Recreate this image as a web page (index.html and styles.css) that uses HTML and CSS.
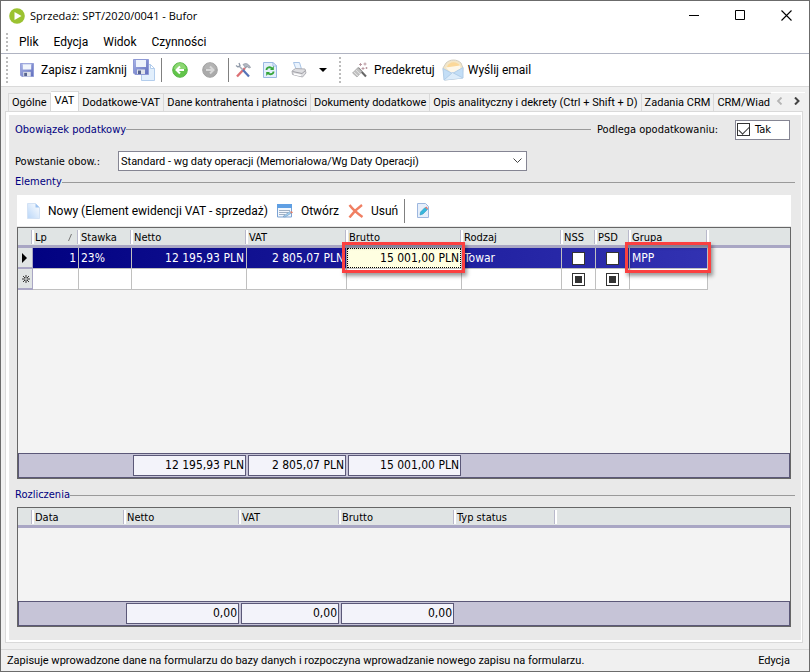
FILE: index.html
```
<!DOCTYPE html>
<html lang="pl">
<head>
    <meta charset="UTF-8">
    <meta name="viewport" content="width=device-width, initial-scale=1.0">
    <title>Sprzedaż: SPT/2020/0041 - Bufor</title>
    <link rel="stylesheet" href="styles.css">
</head>
<body>
    <div class="window">
        <header class="titlebar">
            <svg class="logo" width="16" height="16" viewBox="0 0 16 16">
                <circle cx="8" cy="8" r="7.8" fill="#9bc231"/>
                <path d="M5.5 4v8l7-4z" fill="#fff"/>
            </svg>
            <h1>Sprzedaż: SPT/2020/0041 - Bufor</h1>
            <div class="controls">
                <button aria-label="Minimalizuj"><svg width="11" height="11"><path d="M0 5.5h10" stroke="#000"/></svg></button>
                <button aria-label="Maksymalizuj"><svg width="11" height="11"><path d="M.5.5h9v9h-9z" fill="none" stroke="#000"/></svg></button>
                <button aria-label="Zamknij"><svg width="11" height="11"><path d="M.5.5l10 10M10.5.5l-10 10" stroke="#000" stroke-width="1.1"/></svg></button>
            </div>
        </header>

        <nav class="menu">
            <span class="grip"></span>
            <button>Plik</button>
            <button>Edycja</button>
            <button>Widok</button>
            <button>Czynności</button>
        </nav>

        <div class="toolbar">
            <span class="grip"></span>
            <button class="save">
                <svg width="14" height="14" viewBox="0 0 15 15">
                    <defs>
                        <linearGradient id="disk" x1="0" y1="0" x2="1" y2="1">
                            <stop offset="0" stop-color="#a9b4e6"/>
                            <stop offset="1" stop-color="#5f6dbd"/>
                        </linearGradient>
                    </defs>
                    <path d="M.5.5h14v14H2L.5 13z" fill="url(#disk)" stroke="#8f9ad6"/>
                    <path d="M3 1h9v6H3z" fill="#f1f5fc"/>
                    <path d="M3 1h9v1H3z" fill="#d3dcf2"/>
                    <path d="M3.5 9.5h8v5h-8z" fill="#dfe3ea"/>
                    <path d="M4.5 10.5h3V14h-3z" fill="#56638f"/>
                </svg>
                Zapisz i zamknij
            </button>
            <button class="save-new" aria-label="Zapisz i nowy">
                <svg width="22" height="22" viewBox="0 0 22 22">
                    <path d="M8.5 5.5h9l4 4v12h-13z" fill="#e2effc" stroke="#b3cdec"/>
                    <path d="M17.5 5.5v4h4z" fill="#fff" stroke="#b3cdec"/>
                    <path d="M.5.5h15v15H2L.5 14z" fill="url(#disk)" stroke="#8f9ad6"/>
                    <path d="M3 1h10v7H3z" fill="#eef3fb"/>
                    <path d="M4 10.5h8V15H4z" fill="#dfe3ea"/>
                    <path d="M5 11.5h3V15H5z" fill="#56638f"/>
                </svg>
            </button>
            <span class="separator"></span>
            <button class="nav-icon" aria-label="Poprzedni">
                <svg width="16" height="16" viewBox="0 0 16 16">
                    <circle cx="8" cy="8" r="7.3" fill="#62c44a" stroke="#5ab848"/>
                    <path d="M2 7a6 6 0 0 1 12 0z" fill="#a8e48e" opacity=".6"/>
                    <path d="M12 8H5M8 4.5L4.5 8 8 11.5" fill="none" stroke="#fff" stroke-width="2"/>
                </svg>
            </button>
            <button class="nav-icon" aria-label="Następny" disabled>
                <svg width="16" height="16" viewBox="0 0 16 16">
                    <circle cx="8" cy="8" r="7.3" fill="#aaa" stroke="#a2a2a2"/>
                    <path d="M2 7a6 6 0 0 1 12 0z" fill="#bbb" opacity=".6"/>
                    <path d="M4 8h7M8 4.5L11.5 8 8 11.5" fill="none" stroke="#d8d8d8" stroke-width="2"/>
                </svg>
            </button>
            <span class="separator"></span>
            <button class="tool" aria-label="Narzędzia">
                <svg width="16" height="16" viewBox="0 0 16 16">
                    <path d="M2 14.5L10 6" stroke="#dc7074" stroke-width="2.4"/>
                    <path d="M10 6l2.5-2.5" stroke="#a2a9b5" stroke-width="1.6"/>
                    <path d="M4 4l4 4" stroke="#a2a9b5" stroke-width="1.6"/>
                    <path d="M8 8l6 6.5" stroke="#5573b8" stroke-width="2.2"/>
                    <path d="M1 3.5L3 5l2-1.5L4 1" fill="none" stroke="#8f99a8" stroke-width="1.3"/>
                    <path d="M8 2.5c2.5-1.5 5-1.5 7.5 3L14 6l-2-1.5-1.500 1z" fill="#b4bac4" stroke="#7c8592" stroke-width=".6"/>
                </svg>
            </button>
            <button class="tool" aria-label="Odśwież">
                <svg width="14" height="16" viewBox="0 0 14 16">
                    <path d="M.5.5H10L13.5 4v11.5H.5z" fill="#e3effc" stroke="#9ab8e2"/>
                    <path d="M10 .5V4h3.5z" fill="#fff" stroke="#9ab8e2"/>
                    <path d="M3.5 8c0-3 4-3.5 5.5-1.5M10.5 9.5c0 3-4 3.5-5.5 1.5" fill="none" stroke="#36a63a" stroke-width="1.8"/>
                    <path d="M10.8 4v4H7zM3.2 14v-4H7z" fill="#36a63a"/>
                </svg>
            </button>
            <button class="tool" aria-label="Drukuj">
                <svg width="16" height="16" viewBox="0 0 16 16">
                    <path d="M2.5.5h6l2 6.5H5z" fill="#eaf3fd" stroke="#a9c4e6"/>
                    <path d="M1 9l3.5-2.5L14 7l1 4-3.5 4-10-2.5z" fill="#dedee1" stroke="#b0b0b6"/>
                    <path d="M1.5 9.5l9.5 2 3.5-3" fill="none" stroke="#a0a0a6"/>
                    <path d="M3 12l7 1.5" stroke="#fff" stroke-width="1.5"/>
                </svg>
            </button>
            <button class="arrow" aria-label="Opcje wydruku"><svg width="8" height="4"><path d="M0 0h8L4 4z" fill="#000"/></svg></button>
            <span class="grip"></span>
            <button class="wand">
                <svg width="16" height="16" viewBox="0 0 16 16">
                    <path d="M6 6l8 8.5" stroke="#666" stroke-width="2"/>
                    <path d="M.5 11L6 5.5l4 4L5 15z" fill="#c2c2c2" stroke="#9a9a9a" stroke-width=".6"/>
                    <path d="M2 10l4 4M4 8l4 4" stroke="#e8e8e8" stroke-width=".8"/>
                    <path d="M8.5 1v3M7 2.5h3M13 .5v3M11.5 2h3M11 5v3M9.5 6.5h3M14.5 5v2M13.5 6h2" stroke="#b5929b" stroke-width=".9"/>
                </svg>
                Predekretuj
            </button>
            <button class="mail">
                <svg width="22" height="22" viewBox="0 0 22 22">
                    <path d="M1 9l3-5c4-4 11-4 15 0l2 5-1 10-17 2z" fill="#f3e6c8" stroke="#d3cec2"/>
                    <path d="M5 8c2-6 10-6 13-1l-6 6z" fill="#fbd89a"/>
                    <path d="M4 8.5l14-2 1 6-8 4z" fill="#fdf7ea"/>
                    <path d="M1 9.5l9.5 5L21 8.5V19L2 21z" fill="#c3def6" stroke="#b1cde8"/>
                    <path d="M2 21l8.5-7.5L21 19" fill="#dcecfa" stroke="#b1cde8"/>
                </svg>
                Wyślij email
            </button>
        </div>

        <div class="tabs">
            <div class="tab-list" role="tablist">
                <button class="tab" role="tab">Ogólne</button>
                <button class="tab active" role="tab" aria-selected="true">VAT</button>
                <button class="tab" role="tab">Dodatkowe-VAT</button>
                <button class="tab" role="tab">Dane kontrahenta i płatności</button>
                <button class="tab" role="tab">Dokumenty dodatkowe</button>
                <button class="tab" role="tab">Opis analityczny i dekrety (Ctrl + Shift + D)</button>
                <button class="tab" role="tab">Zadania CRM</button>
                <button class="tab" role="tab">CRM/Wiad</button>
            </div>
            <div class="tab-scroll">
                <button aria-label="Poprzednie zakładki" disabled><svg width="7" height="8"><path d="M5.5.5L2 4l3.5 3.5" fill="none" stroke="#b4b4b4" stroke-width="1.8"/></svg></button>
                <button aria-label="Następne zakładki"><svg width="7" height="8"><path d="M1 .5L4.5 4 1 7.5" fill="none" stroke="#444" stroke-width="2"/></svg></button>
            </div>
        </div>

        <main class="panel">
            <div class="page">
                <div class="tax-row">
                    <h2 class="group-title">Obowiązek podatkowy</h2>
                    <label class="tax-label" for="taxable">Podlega opodatkowaniu:</label>
                    <label class="check-box"><input type="checkbox" class="check" id="taxable" checked>Tak</label>
                </div>
                <div class="field-row">
                    <label for="moment">Powstanie obow.:</label>
                    <select id="moment">
                        <option>Standard - wg daty operacji (Memoriałowa/Wg Daty Operacji)</option>
                    </select>
                </div>

                <h2 class="group-title">Elementy</h2>
                <div class="grid-toolbar">
                    <button class="new">
                        <svg width="13" height="16" viewBox="0 0 13 16">
                            <defs>
                                <linearGradient id="sheet" x1="0" y1="1" x2="1" y2="0">
                                    <stop offset="0" stop-color="#b9d6f8"/>
                                    <stop offset="1" stop-color="#fff"/>
                                </linearGradient>
                            </defs>
                            <path d="M.5.5h8l4 4v11H.5z" fill="url(#sheet)" stroke="#d3e2f5"/>
                            <path d="M8.5.5v4h4z" fill="#9cc2f0"/>
                        </svg>
                        Nowy (Element ewidencji VAT - sprzedaż)
                    </button>
                    <button class="open">
                        <svg width="16" height="14" viewBox="0 0 16 14">
                            <path d="M.5.5h14V13H.5z" fill="#f2f7fd" stroke="#7ba3d4"/>
                            <path d="M0 0h15v4H0z" fill="#5f9fe3"/>
                            <path d="M2 6.5h11M2 8.5h9M2 10.5h6" stroke="#9fb0c4"/>
                            <path d="M6 12.5l7-5L14.5 9 8 13z" fill="#a5d3f2" stroke="#6b8fb5" stroke-width=".6"/>
                            <path d="M13 8l1.5-1L16 8.5l-1.500 1z" fill="#e0806a"/>
                        </svg>
                        Otwórz
                    </button>
                    <button class="delete">
                        <svg width="16" height="14" viewBox="0 0 16 14">
                            <path d="M1.5 1c3 4 8 8.5 13 12M14 1C9 4.5 5 8.5 1.5 13.5" fill="none" stroke="#f07f62" stroke-width="2.4"/>
                        </svg>
                        Usuń
                    </button>
                    <span class="separator"></span>
                    <button class="edit" aria-label="Edytuj">
                        <svg width="12" height="15" viewBox="0 0 12 15">
                            <path d="M.5.5h8l3 3v11H.5z" fill="#e6effb" stroke="#9db7df"/>
                            <path d="M3 12l.5-3L8 4.5l2.5 2L6 11z" fill="#35b7dc" stroke="#2a8fb4" stroke-width=".5"/>
                            <path d="M8 4.5l1.5-1 1.5 2-.5 1z" fill="#e07a6d"/>
                        </svg>
                    </button>
                </div>

                <section class="grid grid-main">
                    <table>
                        <colgroup>
                            <col class="w-mark"><col class="w-lp"><col class="w-rate"><col class="w-amount"><col class="w-vat"><col class="w-amount"><col class="w-vat"><col class="w-flag"><col class="w-flag"><col class="w-group"><col>
                        </colgroup>
                        <thead>
                            <tr>
                                <th></th>
                                <th>Lp <svg class="sort" width="4" height="7"><path d="M.5 7l3-7" stroke="#777"/></svg></th>
                                <th>Stawka</th>
                                <th>Netto</th>
                                <th>VAT</th>
                                <th>Brutto</th>
                                <th>Rodzaj</th>
                                <th>NSS</th>
                                <th>PSD</th>
                                <th>Grupa</th>
                                <th></th>
                            </tr>
                        </thead>
                        <tbody>
                            <tr class="selected">
                                <td class="mark"><svg width="5" height="10"><path d="M0 0v10l5-5z" fill="#000"/></svg></td>
                                <td class="num">1</td>
                                <td>23%</td>
                                <td class="num">12 195,93 PLN</td>
                                <td class="num">2 805,07 PLN</td>
                                <td class="editing"><input type="text" value="15 001,00 PLN" aria-label="Brutto"><span class="frame"></span></td>
                                <td>Towar</td>
                                <td class="flag"><input type="checkbox" class="check" aria-label="NSS"></td>
                                <td class="flag"><input type="checkbox" class="check" aria-label="PSD"></td>
                                <td class="framed">MPP<span class="frame"></span></td>
                                <td class="rest"></td>
                            </tr>
                            <tr>
                                <td class="mark"><svg width="8" height="8"><path d="M4 0v8M0 4h8M1 1l6 6M7 1L1 7" stroke="#333"/><circle cx="4" cy="4" r="1" fill="#e0e4e4"/></svg></td>
                                <td></td>
                                <td></td>
                                <td></td>
                                <td></td>
                                <td></td>
                                <td></td>
                                <td class="flag"><input type="checkbox" class="check mixed" aria-label="NSS, nowy wiersz"></td>
                                <td class="flag"><input type="checkbox" class="check mixed" aria-label="PSD, nowy wiersz"></td>
                                <td></td>
                                <td class="rest"></td>
                            </tr>
                        </tbody>
                    </table>
                    <div class="totals">
                        <output class="w-amount">12 195,93 PLN</output>
                        <output class="w-vat">2 805,07 PLN</output>
                        <output class="w-amount">15 001,00 PLN</output>
                    </div>
                </section>

                <h2 class="group-title">Rozliczenia</h2>
                <section class="grid grid-payments">
                    <table>
                        <colgroup>
                            <col class="w-mark"><col class="w-date"><col class="w-amount"><col class="w-vat"><col class="w-amount"><col class="w-status"><col>
                        </colgroup>
                        <thead>
                            <tr>
                                <th></th>
                                <th>Data</th>
                                <th>Netto</th>
                                <th>VAT</th>
                                <th>Brutto</th>
                                <th>Typ status</th>
                                <th></th>
                            </tr>
                        </thead>
                    </table>
                    <div class="totals">
                        <output class="w-amount">0,00</output>
                        <output class="w-vat">0,00</output>
                        <output class="w-amount">0,00</output>
                    </div>
                </section>
            </div>
        </main>

        <footer class="statusbar">
            <span>Zapisuje wprowadzone dane na formularzu do bazy danych i rozpoczyna wprowadzanie nowego zapisu na formularzu.</span>
            <span>Edycja</span>
        </footer>
    </div>
</body>
</html>
```
FILE: styles.css
```
* {
    box-sizing: border-box;
}

body {
    margin: 0;
    font-family: "DejaVu Sans Condensed", "DejaVu Sans", sans-serif;
    font-size: 11px;
    color: #000;
}

button,
input,
select {
    font: inherit;
    color: inherit;
    margin: 0;
}

button {
    display: flex;
    align-items: center;
    padding: 0;
    border: none;
    background: none;
    white-space: nowrap;
}

svg {
    display: block;
    flex: none;
}

.window {
    display: flex;
    flex-direction: column;
    min-height: 100vh;
    border: 1px solid #6b6b6b;
    background: #f0f0f0;
}

/* Pasek tytułu */
.titlebar {
    display: flex;
    align-items: center;
    height: 29px;
    padding-left: 8px;
    background: #fff;
}

.titlebar h1 {
    flex: 1;
    margin: 0 0 0 5px;
    font-family: "Open Sans", sans-serif;
    font-size: 11px;
    font-weight: normal;
}

.controls {
    display: flex;
}

.controls button {
    justify-content: center;
    width: 46px;
    height: 28px;
}

/* Menu i pasek narzędzi */
.menu,
.toolbar {
    display: flex;
    align-items: center;
    padding-left: 5px;
    background: #fff;
    font-family: Roboto, sans-serif;
    font-size: 12px;
}

.menu {
    height: 24px;
    gap: 15px;
    border-bottom: 1px solid #b0b4c2;
}

.menu .grip {
    margin-right: -4px;
}

.toolbar {
    height: 33px;
    border-bottom: 1px solid #dadada;
}

.grip {
    width: 2px;
    height: 26px;
    background: repeating-linear-gradient(#bcbcbc 0 2px, #fff 2px 4px);
}

.menu .grip {
    height: 18px;
}

.separator {
    width: 1px;
    height: 24px;
    background: #808080;
}

.save {
    gap: 7px;
    margin: 0 6px 0 12px;
}

.save-new {
    margin-right: 6px;
}

.nav-icon {
    width: 30px;
    padding-left: 10px;
}

.nav-icon + .separator {
    margin-left: 6px;
}

.tool {
    width: 28px;
    padding-left: 6px;
}

.arrow {
    width: 26px;
    padding-left: 6px;
}

.wand {
    gap: 6px;
    margin-left: 11px;
}

.mail {
    gap: 4px;
    margin-left: 7px;
}

/* Zakładki */
.tabs {
    display: flex;
    align-items: flex-end;
    height: 24px;
    padding: 0 4px 0 7px;
    font-family: Roboto, sans-serif;
}

.tab-list {
    display: flex;
    flex: 1;
    align-items: flex-end;
    min-width: 0;
    overflow: hidden;
}

.tab {
    flex: none;
    height: 18px;
    padding: 0 3px;
    border: 1px solid #d9d9d9;
    border-width: 1px 1px 0 0;
}

.tab:first-child {
    border-left-width: 1px;
}

.tab.active {
    height: 20px;
    padding: 0 4px 3px;
    background: #fff;
}

.tab-scroll {
    display: flex;
    align-items: center;
    gap: 11px;
    height: 19px;
    padding: 0 4px 3px 5px;
    border-top: 1px solid #fff;
}

/* Treść zakładki */
.panel {
    display: flex;
    flex: 1;
    margin: 0 6px 6px 4px;
    padding: 3px 1px 2px 3px;
    border: 1px solid #d9d9d9;
    background: #fff;
}

.page {
    display: flex;
    flex: 1;
    flex-direction: column;
    min-width: 0;
    padding: 4px 6px 13px;
    background: #e9e9e9;
}

.group-title {
    display: flex;
    flex: 1;
    align-items: center;
    margin: 0;
    color: #000080;
    font-size: 11px;
    font-weight: normal;
    line-height: 14px;
}

.group-title::after {
    content: "";
    flex: 1;
    height: 1px;
    background: #9a9a9a;
}

.page > .group-title {
    flex: none;
}

.tax-row {
    display: flex;
    align-items: center;
    height: 21px;
    padding-right: 5px;
    gap: 6px;
}

.tax-label {
    width: 126px;
}

.check-box {
    display: flex;
    align-items: center;
    gap: 5px;
    width: 55px;
    height: 20px;
    margin-left: 6px;
    padding-left: 1px;
    border: 1px solid #858593;
    background: #fff;
}

.check {
    flex: none;
    width: 13px;
    height: 13px;
    appearance: none;
    border: 1px solid #333;
    background: #fff;
}

.check:checked::before {
    content: "";
    display: block;
    width: 9px;
    height: 5px;
    margin: 2px 1px;
    border: solid #333;
    border-width: 0 0 1px 1px;
    transform: rotate(-45deg);
}

.check.mixed::before {
    content: "";
    display: block;
    width: 7px;
    height: 7px;
    margin: 2px;
    background: #333;
}

.field-row {
    display: flex;
    align-items: center;
    margin: 11px 0 4px;
}

.field-row label {
    width: 103px;
}

.field-row select {
    width: 409px;
    height: 20px;
    padding: 0 20px 0 2px;
    border: 1px solid #858593;
    border-radius: 0;
    appearance: none;
    background: #fff url("data:image/svg+xml,%3Csvg xmlns='http://www.w3.org/2000/svg' width='9' height='6'%3E%3Cpath d='M.5 .5l4 4 4-4' fill='none' stroke='%23444'/%3E%3C/svg%3E") no-repeat right 4px center;
    font-family: Roboto, sans-serif;
}

.grid-toolbar {
    display: flex;
    align-items: center;
    height: 31px;
    margin: 6px 4px 1px 2px;
    padding-left: 10px;
    background: #fff;
    font-family: Roboto, sans-serif;
    font-size: 12px;
}

.new,
.open {
    gap: 8px;
    margin-right: 9px;
}

.delete {
    gap: 7px;
    margin-right: 6px;
}

.edit {
    margin-left: 12px;
}

/* Tabele */
.grid {
    display: flex;
    flex-direction: column;
    margin: 0 4px 0 2px;
    border: 1px solid #666;
    background: #f3f3f3;
}

.grid-main {
    flex: 1;
    margin-bottom: 9px;
}

.grid-payments {
    min-height: 120px;
    margin-top: 5px;
}

.grid table {
    width: 100%;
    table-layout: fixed;
    border-collapse: separate;
    border-spacing: 0;
}

.w-mark {
    width: 15px;
}

.w-lp {
    width: 46px;
}

.w-rate {
    width: 53px;
}

.w-amount {
    width: 115px;
}

.w-vat {
    width: 100px;
}

.w-flag {
    width: 34px;
}

.w-group {
    width: 78px;
}

.w-date {
    width: 92px;
}

.w-status {
    width: 101px;
}

th {
    position: relative;
    height: 20px;
    padding: 2px 0 0 2px;
    border-bottom: 3px solid #a9a6c4;
    background: #e0e4e4;
    font-weight: normal;
    text-align: left;
    line-height: 14px;
    white-space: nowrap;
}

th:not(:last-child)::after {
    content: "";
    position: absolute;
    top: 2px;
    right: -1px;
    z-index: 1;
    width: 2px;
    height: 14px;
    border-left: 1px solid #b9b9cb;
    background: #fff;
}

.sort {
    display: inline-block;
    margin-left: 18px;
}

td {
    height: 21px;
    padding: 0 2px;
    border: solid #c0c0c0;
    border-width: 0 1px 1px 0;
    background: #fff;
    font-size: 12px;
    white-space: nowrap;
}

.selected {
    background: linear-gradient(90deg, #000080, #3838b8);
}

.selected td {
    background: none;
    color: #fff;
}

.selected .framed {
    position: relative;
}

td.num {
    text-align: right;
}

td.mark,
.selected td.mark {
    padding-left: 4px;
    border-color: #a9a6c4;
    border-bottom-width: 2px;
    background: #e0e4e4;
}

td.mark + td {
    padding-left: 3px;
}

td.flag .check {
    display: block;
    margin: 0 auto;
}

td.rest,
.selected td.rest {
    border: none;
    background: #f3f3f3;
}

.selected .editing {
    position: relative;
    padding: 0;
}

.editing input {
    display: block;
    width: 100%;
    height: 20px;
    padding: 0 1px;
    border: 1px dotted #000;
    outline: none;
    background: #ffffe1;
    color: #000;
    text-align: right;
}

/* Czerwona ramka wokół wyróżnionej komórki */
.frame {
    position: absolute;
    inset: -6px -4px -5px -5px;
    z-index: 2;
    border: 3px solid #fb4040;
    box-shadow: 2px 3px 4px rgba(0, 0, 0, 0.4), inset 2px 3px 3px rgba(0, 0, 0, 0.25);
    pointer-events: none;
}

.totals {
    display: flex;
    height: 25px;
    margin-top: auto;
    padding: 1px 0 1px 113px;
    border: 1px solid #5b5878;
    background: #c6c4d7;
}

.grid-payments .totals {
    padding-left: 106px;
}

.totals output {
    margin: 0 1px;
    padding-right: 1px;
    border: 1px solid #5b5878;
    background: #f3f3fa;
    font-size: 12px;
    line-height: 19px;
    text-align: right;
}

.totals .w-amount {
    width: 113px;
}

.totals .w-vat {
    width: 98px;
}

/* Pasek stanu */
.statusbar {
    display: flex;
    align-items: center;
    justify-content: space-between;
    height: 22px;
    padding: 0 19px 0 6px;
    border-top: 1px solid #d9d9d9;
    font-family: Roboto, sans-serif;
}
```
